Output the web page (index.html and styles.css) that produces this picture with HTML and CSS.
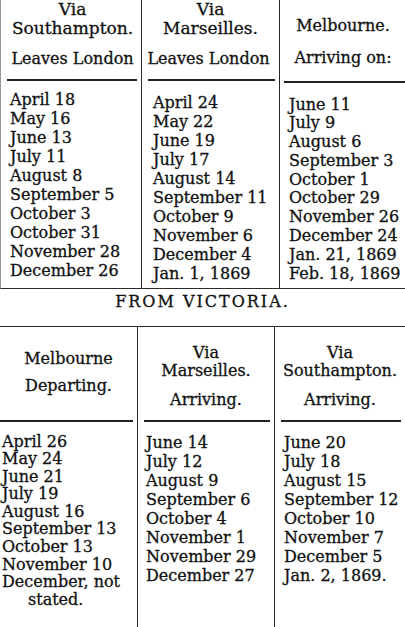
FILE: index.html
```html
<!DOCTYPE html>
<html>
<head>
<meta charset="utf-8">
<link rel="stylesheet" href="styles.css">
</head>
<body>
<div class="page">
  <section class="sched top">
    <div class="col c1">
      <div class="head">
        <div class="via">Via</div>
        <div class="l2">Southampton.</div>
        <div class="l3">Leaves London</div>
      </div>
      <div class="rule"></div>
      <ul class="dates">
        <li>April 18</li><li>May 16</li><li>June 13</li><li>July 11</li><li>August 8</li>
        <li>September 5</li><li>October 3</li><li>October 31</li><li>November 28</li><li>December 26</li>
      </ul>
    </div>
    <div class="col c2">
      <div class="head">
        <div class="via">Via</div>
        <div class="l2">Marseilles.</div>
        <div class="l3">Leaves London</div>
      </div>
      <div class="rule"></div>
      <ul class="dates">
        <li>April 24</li><li>May 22</li><li>June 19</li><li>July 17</li><li>August 14</li>
        <li>September 11</li><li>October 9</li><li>November 6</li><li>December 4</li><li>Jan. 1, 1869</li>
      </ul>
    </div>
    <div class="col c3">
      <div class="head">
        <div class="m1">Melbourne.</div>
        <div class="m2">Arriving on:</div>
      </div>
      <div class="rule"></div>
      <ul class="dates">
        <li>June 11</li><li>July 9</li><li>August 6</li><li>September 3</li><li>October 1</li>
        <li>October 29</li><li>November 26</li><li>December 24</li><li>Jan. 21, 1869</li><li>Feb. 18, 1869</li>
      </ul>
    </div>
  </section>
  <div class="title">FROM VICTORIA.</div>
  <section class="sched bottom">
    <div class="col c1">
      <div class="head">
        <div class="m1">Melbourne</div>
        <div class="m2">Departing.</div>
      </div>
      <div class="rule"></div>
      <ul class="dates">
        <li>April 26</li><li>May 24</li><li>June 21</li><li>July 19</li><li>August 16</li>
        <li>September 13</li><li>October 13</li><li>November 10</li><li>December, not</li><li class="cont">stated.</li>
      </ul>
    </div>
    <div class="col c2">
      <div class="head">
        <div class="via">Via</div>
        <div class="l2">Marseilles.</div>
        <div class="l3">Arriving.</div>
      </div>
      <div class="rule"></div>
      <ul class="dates">
        <li>June 14</li><li>July 12</li><li>August 9</li><li>September 6</li><li>October 4</li>
        <li>November 1</li><li>November 29</li><li>December 27</li>
      </ul>
    </div>
    <div class="col c3">
      <div class="head">
        <div class="via">Via</div>
        <div class="l2">Southampton.</div>
        <div class="l3">Arriving.</div>
      </div>
      <div class="rule"></div>
      <ul class="dates">
        <li>June 20</li><li>July 18</li><li>August 15</li><li>September 12</li><li>October 10</li>
        <li>November 7</li><li>December 5</li><li>Jan. 2, 1869.</li>
      </ul>
    </div>
  </section>
</div>
</body>
</html>
```
FILE: styles.css
```css
html, body {
  margin: 0;
  padding: 0;
  background: #fff;
}
body {
  font-family: "DejaVu Serif", "Liberation Serif", serif;
  font-size: 16px;
  color: #111;
  -webkit-text-stroke: 0.3px #111;
}
.page {
  width: 405px;
  height: 627px;
  overflow: hidden;
}
.sched {
  display: grid;
}
.top {
  grid-template-columns: 140px 138px 127px;
  height: 289px;
  border-bottom: 1.5px solid #2a2a2a;
  border-left: 1px solid #999;
  box-sizing: border-box;
}
.bottom {
  grid-template-columns: 137px 137px 131px;
  height: 300px;
  border-top: 1.5px solid #2a2a2a;
}
.col + .col {
  border-left: 1.5px solid #2a2a2a;
}
.head {
  display: flow-root;
  text-align: center;
  white-space: nowrap;
}
.rule {
  height: 1.5px;
  background: #222;
  margin: 0 4px 0 6px;
}
.dates {
  list-style: none;
  margin: 0;
  padding: 0;
  white-space: nowrap;
}
.dates li {
  line-height: 19px;
}

/* top table */
.top .head { height: 79px; }
.top .via { line-height: 18px; font-size: 17px; }
.top .l2 { line-height: 20px; font-size: 17px; }
.top .l3 { line-height: 20px; margin-top: 11px; }
.top .c1 .head { padding-left: 3px; }
.top .c2 .l3 { margin-left: -4px; }
.top .m1 { line-height: 20px; margin-top: 16px; }
.top .m2 { line-height: 20px; margin-top: 12px; }
.top .c3 .head { height: 81px; }
.top .c3 .rule { margin: 0 0 0 4px; }
.top .c1 .dates { padding: 9px 0 0 9px; }
.top .c1 .dates li { line-height: 19.1px; }
.top .c2 .dates { padding: 12px 0 0 11px; }
.top .c3 .dates { padding: 13px 0 0 9px; }
.top .c3 .dates li { line-height: 18.8px; }

/* title */
.title {
  text-align: center;
  letter-spacing: 2px;
  line-height: 20px;
  padding: 3px 0 14px 0;
  height: 20px;
}

/* bottom table */
.bottom .head { height: 93px; }
.bottom .m1 { line-height: 20px; margin-top: 22px; }
.bottom .m2 { line-height: 20px; margin-top: 7px; }
.bottom .via { line-height: 18px; margin-top: 17px; }
.bottom .l2 { line-height: 18px; }
.bottom .l3 { line-height: 20px; margin-top: 10px; }
.bottom .c1 .rule { margin: 0 4px 0 0; }
.bottom .c1 .dates { padding: 11px 0 0 2px; }
.bottom .c1 .dates li { line-height: 17.6px; }
.bottom .c1 .dates li.cont { padding-left: 26px; }
.bottom .c2 .dates { padding: 11px 0 0 8px; }
.bottom .c3 .dates { padding: 11px 0 0 9px; }
```
